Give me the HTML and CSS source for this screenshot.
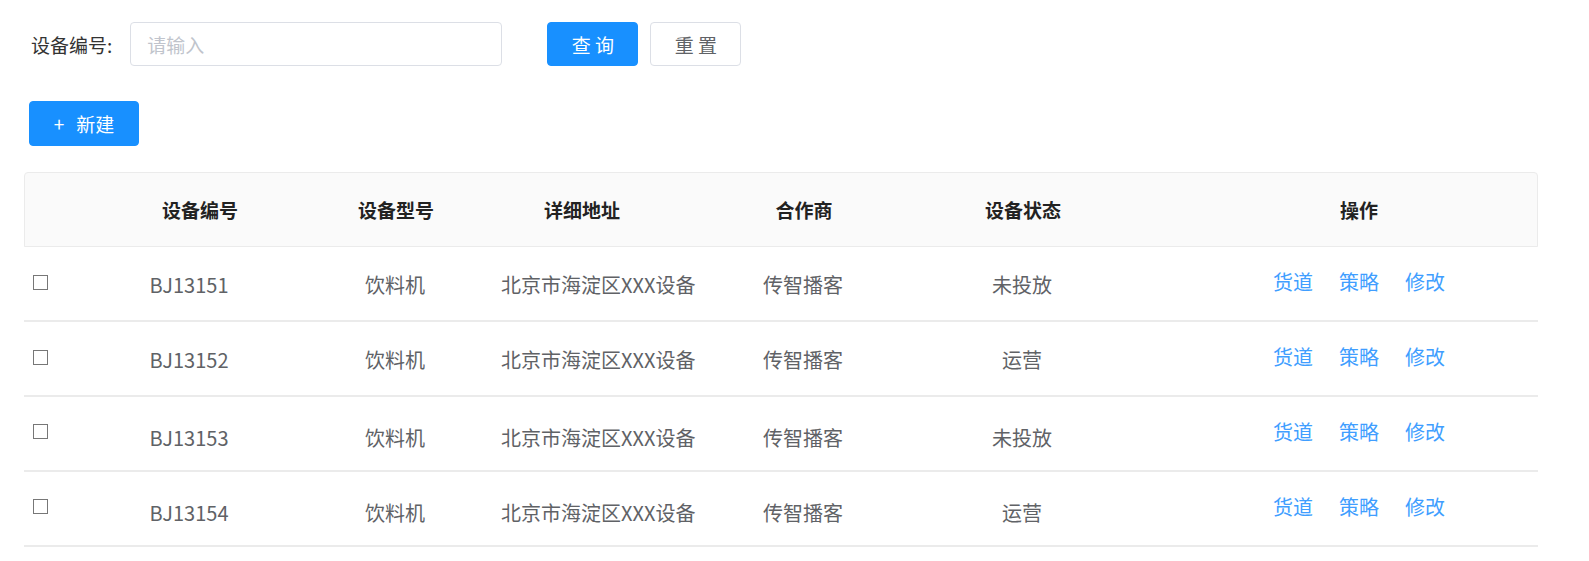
FILE: index.html
```html
<!DOCTYPE html>
<html lang="zh-CN">
<head>
    <meta charset="UTF-8">
    <meta name="viewport" content="width=device-width, initial-scale=1.0">
    <title>设备管理</title>
    <link rel="stylesheet" href="styles.css">
</head>
<body>
    <div class="page">
        <form class="search-bar" onsubmit="return false">
            <label class="search-label" for="deviceNo">设备编号:</label>
            <input class="search-input" id="deviceNo" type="text" placeholder="请输入">
            <button class="btn btn-primary btn-query" type="submit">查 询</button>
            <button class="btn btn-default" type="reset">重 置</button>
        </form>

        <div class="toolbar">
            <button class="btn btn-primary btn-new"><span class="plus">+</span>新建</button>
        </div>

        <div class="table">
            <div class="table-head">
                <div class="cell"></div>
                <div class="cell">设备编号</div>
                <div class="cell">设备型号</div>
                <div class="cell">详细地址</div>
                <div class="cell">合作商</div>
                <div class="cell">设备状态</div>
                <div class="cell cell-ops">操作</div>
            </div>

            <div class="table-row">
                <div class="cell cell-check"><span class="checkbox"></span></div>
                <div class="cell cell-id">BJ13151</div>
                <div class="cell">饮料机</div>
                <div class="cell cell-addr">北京市海淀区XXX设备</div>
                <div class="cell">传智播客</div>
                <div class="cell">未投放</div>
                <div class="cell cell-ops"><a href="#">货道</a><a href="#">策略</a><a href="#">修改</a></div>
            </div>
            <div class="table-row">
                <div class="cell cell-check"><span class="checkbox"></span></div>
                <div class="cell cell-id">BJ13152</div>
                <div class="cell">饮料机</div>
                <div class="cell cell-addr">北京市海淀区XXX设备</div>
                <div class="cell">传智播客</div>
                <div class="cell">运营</div>
                <div class="cell cell-ops"><a href="#">货道</a><a href="#">策略</a><a href="#">修改</a></div>
            </div>
            <div class="table-row row-low">
                <div class="cell cell-check"><span class="checkbox"></span></div>
                <div class="cell cell-id">BJ13153</div>
                <div class="cell">饮料机</div>
                <div class="cell cell-addr">北京市海淀区XXX设备</div>
                <div class="cell">传智播客</div>
                <div class="cell">未投放</div>
                <div class="cell cell-ops"><a href="#">货道</a><a href="#">策略</a><a href="#">修改</a></div>
            </div>
            <div class="table-row row-low">
                <div class="cell cell-check"><span class="checkbox"></span></div>
                <div class="cell cell-id">BJ13154</div>
                <div class="cell">饮料机</div>
                <div class="cell cell-addr">北京市海淀区XXX设备</div>
                <div class="cell">传智播客</div>
                <div class="cell">运营</div>
                <div class="cell cell-ops"><a href="#">货道</a><a href="#">策略</a><a href="#">修改</a></div>
            </div>
        </div>
    </div>
</body>
</html>
```

FILE: styles.css
```css
* {
    box-sizing: border-box;
}

body {
    margin: 0;
    background: #fff;
    font-family: "Noto Sans CJK SC", "Noto Sans", sans-serif;
    color: #606266;
}

.page {
    padding: 22px 51px 0 24px;
}

/* search */
.search-bar {
    display: flex;
    align-items: center;
    padding-left: 7px;
}

.search-label {
    font-size: 19px;
    color: #333;
    margin-right: 18px;
}

.search-input {
    width: 372px;
    height: 44px;
    border: 1px solid #dcdfe6;
    border-radius: 4px;
    padding: 0 16px;
    font-family: inherit;
    font-size: 19px;
    color: #606266;
    outline: none;
}

.search-input::placeholder {
    color: #c0c4cc;
}

.btn {
    height: 44px;
    border-radius: 4px;
    font-family: inherit;
    font-size: 19px;
    cursor: pointer;
}

.btn-primary {
    background: #1890ff;
    border: 1px solid #1890ff;
    color: #fff;
}

.btn-default {
    width: 91px;
    background: #fff;
    border: 1px solid #dcdfe6;
    color: #606266;
    margin-left: 12px;
}

.btn-query {
    width: 91px;
    margin-left: 45px;
}

.toolbar {
    padding: 35px 0 26px 5px;
}

.btn-new {
    width: 110px;
    height: 45px;
}

.plus {
    margin-right: 12px;
}

/* table */
.table-head,
.table-row {
    display: grid;
    grid-template-columns: 76px 198px 194px 178px 266px 172px 1fr;
}

.table-head {
    height: 75px;
    align-items: center;
    background: #fafafa;
    border: 1px solid #ebebeb;
    border-radius: 4px 4px 0 0;
    font-size: 19px;
    font-weight: bold;
    color: #222;
}

.cell {
    text-align: center;
    white-space: nowrap;
}

.table-row {
    height: 75px;
    border-bottom: 2px solid #ebebeb;
    font-size: 20px;
    line-height: 24px;
    padding-top: 26px;
}

.table-row.row-low {
    padding-top: 29px;
}

.table-row .cell-check {
    text-align: left;
    padding-left: 9px;
    padding-top: 2px;
}

.row-low .cell-check {
    margin-top: -4px;
}

.checkbox {
    display: block;
    width: 15px;
    height: 15px;
    border: 1px solid #777;
    background: #fff;
}

.table-row .cell-id {
    padding-right: 20px;
}

.table-row .cell-addr {
    text-align: left;
    padding-left: 9px;
}

.cell-ops {
    padding-left: 72px;
}

.table-row .cell-ops {
    margin-top: -3px;
}

.row-low .cell-ops {
    margin-top: -6px;
}

.cell-ops a {
    color: #409eff;
    text-decoration: none;
    margin: 0 13px;
}
```
